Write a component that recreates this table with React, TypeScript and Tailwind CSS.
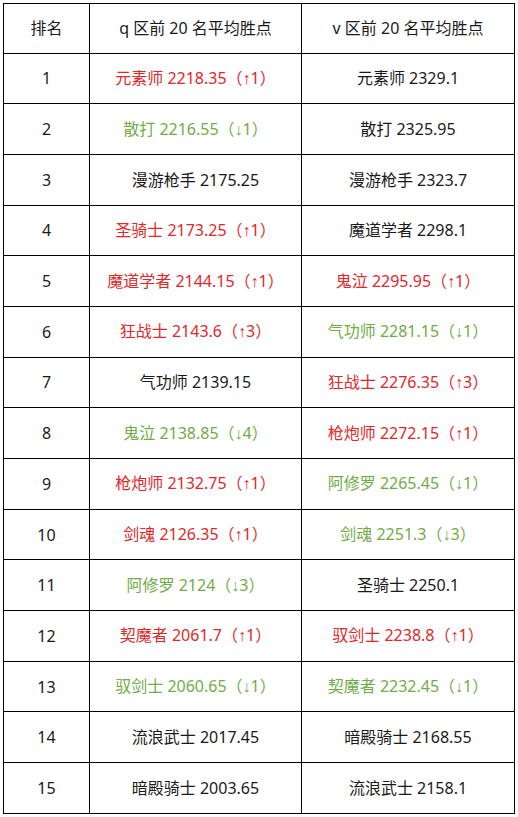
type Cell = { text: string; tone?: "up" | "down"; change?: string };

const rows: [Cell, Cell][] = [
  [{ text: "元素师 2218.35", tone: "up", change: "1" }, { text: "元素师 2329.1" }],
  [{ text: "散打 2216.55", tone: "down", change: "1" }, { text: "散打 2325.95" }],
  [{ text: "漫游枪手 2175.25" }, { text: "漫游枪手 2323.7" }],
  [{ text: "圣骑士 2173.25", tone: "up", change: "1" }, { text: "魔道学者 2298.1" }],
  [
    { text: "魔道学者 2144.15", tone: "up", change: "1" },
    { text: "鬼泣 2295.95", tone: "up", change: "1" },
  ],
  [
    { text: "狂战士 2143.6", tone: "up", change: "3" },
    { text: "气功师 2281.15", tone: "down", change: "1" },
  ],
  [{ text: "气功师 2139.15" }, { text: "狂战士 2276.35", tone: "up", change: "3" }],
  [
    { text: "鬼泣 2138.85", tone: "down", change: "4" },
    { text: "枪炮师 2272.15", tone: "up", change: "1" },
  ],
  [
    { text: "枪炮师 2132.75", tone: "up", change: "1" },
    { text: "阿修罗 2265.45", tone: "down", change: "1" },
  ],
  [
    { text: "剑魂 2126.35", tone: "up", change: "1" },
    { text: "剑魂 2251.3", tone: "down", change: "3" },
  ],
  [{ text: "阿修罗 2124", tone: "down", change: "3" }, { text: "圣骑士 2250.1" }],
  [
    { text: "契魔者 2061.7", tone: "up", change: "1" },
    { text: "驭剑士 2238.8", tone: "up", change: "1" },
  ],
  [
    { text: "驭剑士 2060.65", tone: "down", change: "1" },
    { text: "契魔者 2232.45", tone: "down", change: "1" },
  ],
  [{ text: "流浪武士 2017.45" }, { text: "暗殿骑士 2168.55" }],
  [{ text: "暗殿骑士 2003.65" }, { text: "流浪武士 2158.1" }],
];

function toneClass(tone?: "up" | "down") {
  if (tone === "up") return "text-[#e0282a]";
  if (tone === "down") return "text-[#70ad47]";
  return "text-[#1a1a1a]";
}

function Value({ cell }: { cell: Cell }) {
  return (
    <td className={`border border-black ${toneClass(cell.tone)}`}>
      {cell.text}
      {cell.change && (
        <>
          （
          <span style={{ fontFamily: '"Liberation Sans", sans-serif' }}>
            {cell.tone === "up" ? "↑" : "↓"}
          </span>
          {cell.change}）
        </>
      )}
    </td>
  );
}

export default function App() {
  return (
    <div
      className="bg-white p-[3px] min-h-[817px]"
      style={{ fontFamily: '"Noto Sans", "Noto Sans CJK SC", sans-serif' }}
    >
      <table className="w-[511px] border-collapse text-[16px] text-center table-fixed">
        <colgroup>
          <col className="w-[86px]" />
          <col className="w-[212px]" />
          <col className="w-[213px]" />
        </colgroup>
        <thead>
          <tr className="h-[49.5px]">
            <th className="border border-black font-normal text-[#1a1a1a]">排名</th>
            <th className="border border-black font-normal text-[#1a1a1a]">
              q 区前 20 名平均胜点
            </th>
            <th className="border border-black font-normal text-[#1a1a1a]">
              v 区前 20 名平均胜点
            </th>
          </tr>
        </thead>
        <tbody>
          {rows.map(([q, v], i) => (
            <tr key={i} className="h-[50.7px]">
              <td className="border border-black text-[#1a1a1a]">{i + 1}</td>
              <Value cell={q} />
              <Value cell={v} />
            </tr>
          ))}
        </tbody>
      </table>
    </div>
  );
}
